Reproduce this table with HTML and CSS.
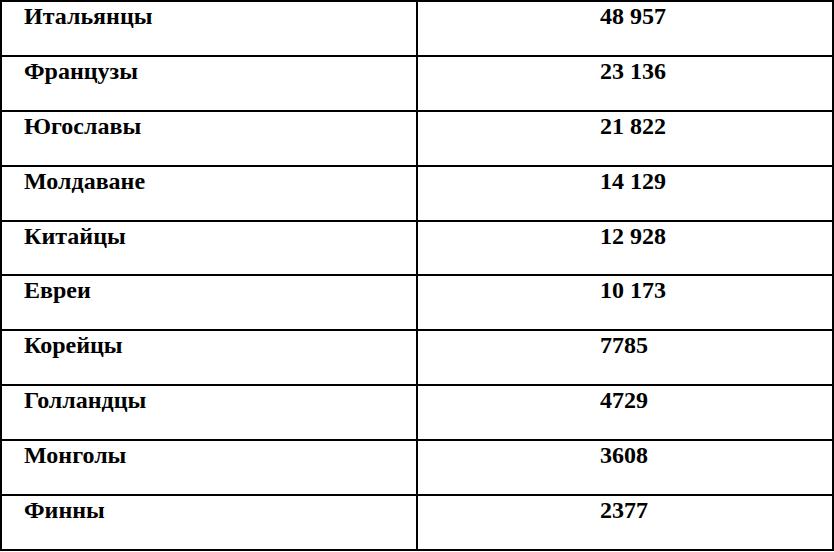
FILE: index.html
```html
<!DOCTYPE html>
<html lang="ru">
<head>
<meta charset="utf-8">
<title>Таблица</title>
<link rel="stylesheet" href="styles.css">
</head>
<body>
<table class="data">
  <tbody>
    <tr><td class="name">Итальянцы</td><td class="num">48 957</td></tr>
    <tr><td class="name">Французы</td><td class="num">23 136</td></tr>
    <tr><td class="name">Югославы</td><td class="num">21 822</td></tr>
    <tr><td class="name">Молдаване</td><td class="num">14 129</td></tr>
    <tr><td class="name">Китайцы</td><td class="num">12 928</td></tr>
    <tr><td class="name">Евреи</td><td class="num">10 173</td></tr>
    <tr><td class="name">Корейцы</td><td class="num">7785</td></tr>
    <tr><td class="name">Голландцы</td><td class="num">4729</td></tr>
    <tr><td class="name">Монголы</td><td class="num">3608</td></tr>
    <tr><td class="name">Финны</td><td class="num">2377</td></tr>
  </tbody>
</table>
</body>
</html>
```
FILE: styles.css
```css
html, body {
  margin: 0;
  padding: 0;
  background: #ffffff;
}

.data {
  border-collapse: separate;
  border-spacing: 0;
  width: 834px;
  table-layout: fixed;
  border-top: 2px solid #000;
  border-left: 2px solid #000;
  font-family: "Liberation Serif", "Times New Roman", serif;
  font-weight: bold;
  font-size: 24px;
  line-height: 27px;
  color: #000;
}

.data td {
  vertical-align: top;
  height: 52.9px;
  padding: 1px 0 0 0;
  box-sizing: border-box;
  border-right: 2px solid #000;
  border-bottom: 2px solid #000;
  white-space: nowrap;
}

.data tr {
  height: 54.9px;
}

.name {
  width: 416px;
  padding-left: 22px !important;
}

.num {
  padding-left: 182px !important;
}
```
